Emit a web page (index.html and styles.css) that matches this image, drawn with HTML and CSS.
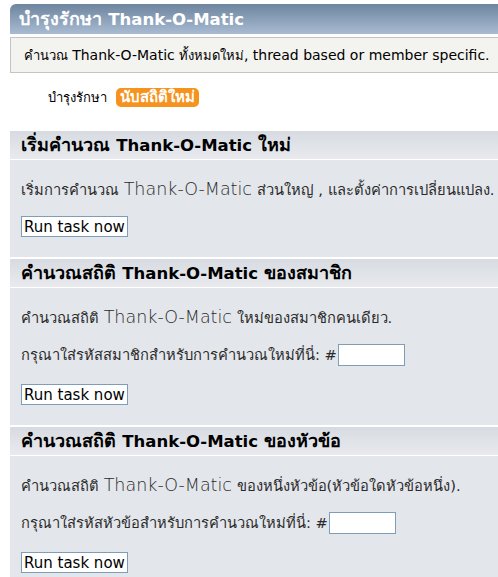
FILE: index.html
```html
<!DOCTYPE html>
<html>
<head>
    <title>บำรุงรักษา Thank-O-Matic</title>
    <link rel="stylesheet" href="styles.css">
</head>
<body>
    <div class="page">
        <div class="tborder">
            <h1 class="titlebg">บำรุงรักษา <span class="en">Thank-O-Matic</span></h1>
            <div class="description">คำนวณ <span class="en">Thank-O-Matic</span> ทั้งหมดใหม่<span class="en">, thread based or member specific.</span></div>
        </div>

        <div class="tabs">
            <span>บำรุงรักษา</span>
            <span class="tab-active">นับสถิติใหม่</span>
        </div>

        <div class="section">
            <h3 class="catbg">เริ่มคำนวณ <span class="en">Thank-O-Matic</span> ใหม่</h3>
            <div class="windowbg">
                <p>เริ่มการคำนวณ <span class="en">Thank-O-Matic</span> ส่วนใหญ่ , และตั้งค่าการเปลี่ยนแปลง.</p>
                <div><button>Run task now</button></div>
            </div>
        </div>

        <div class="section">
            <h3 class="catbg">คำนวณสถิติ <span class="en">Thank-O-Matic</span> ของสมาชิก</h3>
            <div class="windowbg">
                <p>คำนวณสถิติ <span class="en">Thank-O-Matic</span> ใหม่ของสมาชิกคนเดียว.</p>
                <p class="row">กรุณาใส่รหัสสมาชิกสำหรับการคำนวณใหม่ที่นี่: #<input type="text" class="id-field"></p>
                <div><button>Run task now</button></div>
            </div>
        </div>

        <div class="section">
            <h3 class="catbg">คำนวณสถิติ <span class="en">Thank-O-Matic</span> ของหัวข้อ</h3>
            <div class="windowbg">
                <p>คำนวณสถิติ <span class="en">Thank-O-Matic</span> ของหนึ่งหัวข้อ(หัวข้อใดหัวข้อหนึ่ง).</p>
                <p class="row">กรุณาใส่รหัสหัวข้อสำหรับการคำนวณใหม่ที่นี่: #<input type="text" class="id-field"></p>
                <div><button>Run task now</button></div>
            </div>
        </div>
    </div>
</body>
</html>
```

FILE: styles.css
```css
html, body {
    overflow: hidden;
}
body {
    margin: 0;
    font-family: Tahoma, "DejaVu Sans", "Noto Sans", sans-serif;
    font-size: 13px;
    color: #000;
    background: #fff;
}
.page {
    margin: 4px 0 0 10px;
    width: 560px;
    white-space: nowrap;
}
.titlebg {
    margin: 0;
    height: 30px;
    line-height: 30px;
    padding-left: 9px;
    font-size: 18px;
    font-weight: bold;
    color: #fff;
    background: linear-gradient(#6e859f, #a8bbd2);
    border-radius: 6px 0 0 0;
}
.titlebg .en {
    font-size: 16.5px;
}
.description {
    margin-top: 3px;
    height: 34px;
    line-height: 34px;
    padding-left: 13px;
    background: #f3f3ef;
    border: 1px solid #c4c4c4;
    border-right: none;
}
.description .en {
    font-size: 14px;
}
.tabs {
    display: flex;
    align-items: center;
    gap: 9px;
    height: 20px;
    margin: 14px 0 0 38px;
}
.tab-active {
    background: #f6921e;
    color: #fff;
    font-weight: bold;
    font-size: 15px;
    line-height: 17px;
    padding: 1px 4px;
    border-radius: 5px;
}
.tabs + .section {
    margin-top: 24px;
}
.section + .section {
    margin-top: 2px;
}
.catbg {
    margin: 0;
    height: 28px;
    line-height: 28px;
    padding-left: 11px;
    font-size: 18px;
    font-weight: bold;
    background: linear-gradient(#d7dbe1, #e8eaee);
    border-bottom: 1px solid #fff;
}
.catbg .en {
    font-size: 16.5px;
}
.windowbg {
    display: flex;
    flex-direction: column;
    gap: 18px;
    padding: 20px 0 20px 11px;
    background: #e3e6eb;
}
.windowbg p {
    margin: 0;
    height: 18px;
    font-size: 14.7px;
    line-height: 18px;
    color: #2a2a2a;
}
.windowbg p .en {
    font-family: "DejaVu Sans ExtraLight", "DejaVu Sans", sans-serif;
    font-weight: 200;
    font-size: 17.5px;
}
.windowbg .row {
    display: flex;
    align-items: center;
    height: 22px;
}
.id-field {
    width: 67px;
    height: 22px;
    box-sizing: border-box;
    border: 1px solid #7f9db9;
    background: #fff;
    padding: 0 2px;
    margin: 0 0 0 1px;
}
button {
    font-family: inherit;
    font-size: 15px;
    height: 21px;
    padding: 0 2px;
    background: #fff;
    border: 1px solid #7f9db9;
    color: #000;
}
```
